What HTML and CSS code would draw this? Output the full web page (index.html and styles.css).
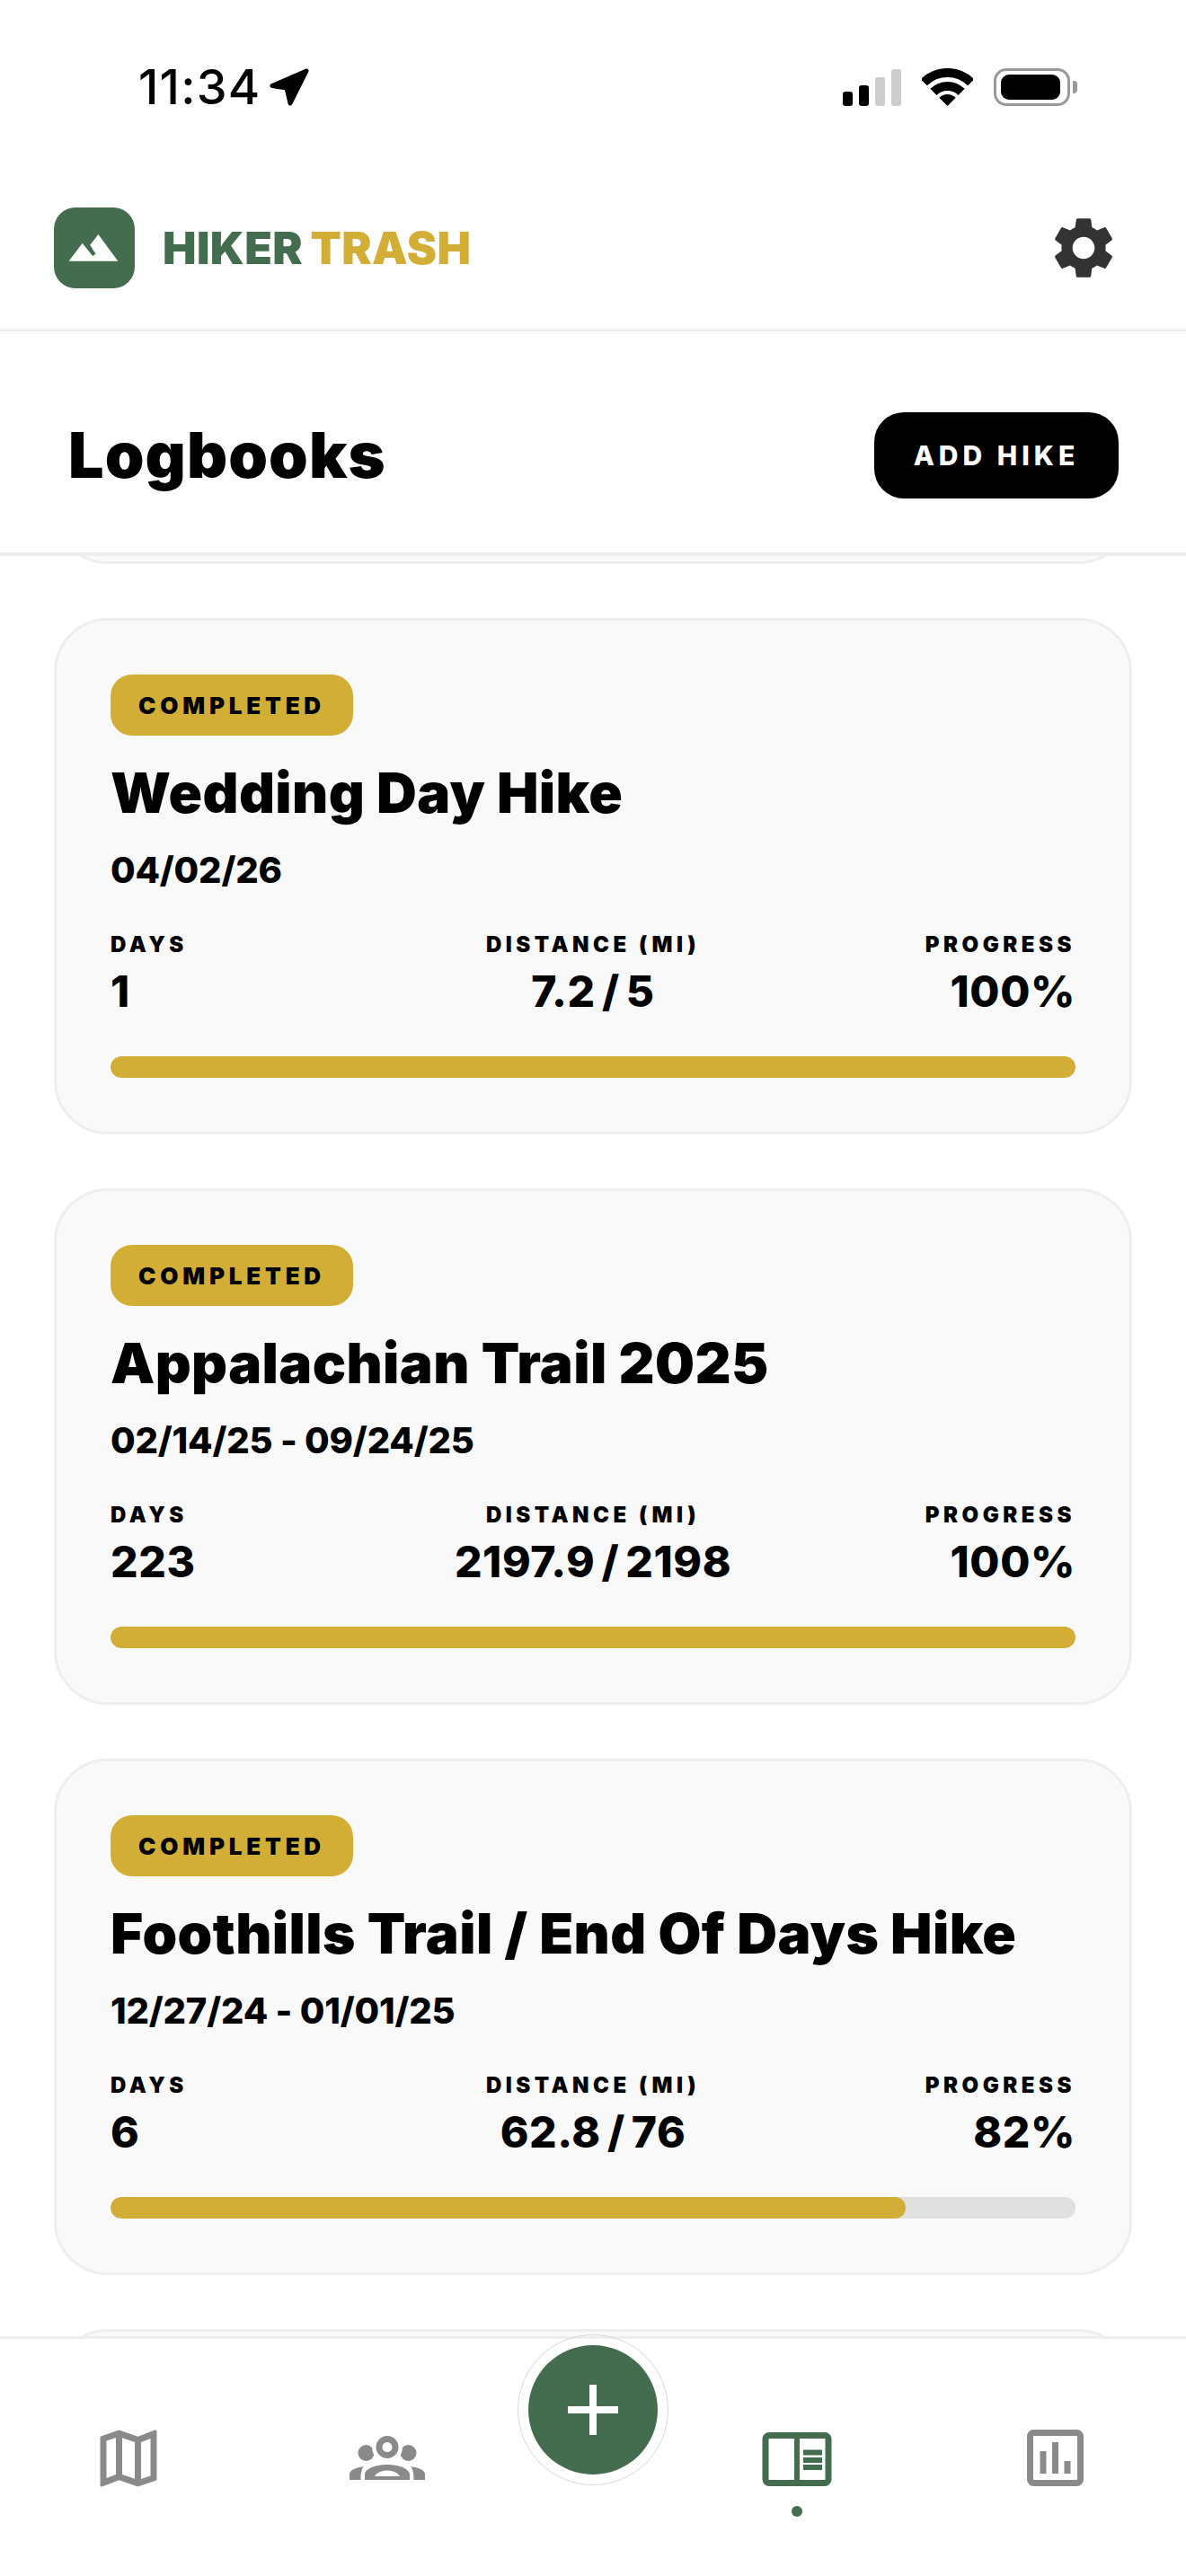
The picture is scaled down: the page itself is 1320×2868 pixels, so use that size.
FILE: index.html
```html
<!DOCTYPE html>
<html lang="en">

<head>
    <meta charset="UTF-8">
    <meta name="viewport" content="width=device-width, initial-scale=1.0">
    <link rel="stylesheet" href="styles.css">
    <title>Logbooks</title>
</head>

<body>
    <div class="app">
        <div class="status-bar">
            <div class="status-left">
                <span class="time">11:34</span>
                <svg class="location" width="44" height="42" viewBox="0 0 44 42">
                    <path d="M41 3 3 19.500 19 22 23 39Z" fill="#000" stroke="#000" stroke-width="5" stroke-linejoin="round" />
                </svg>
            </div>
            <div class="status-right">
                <div class="signal">
                    <span class="bar bar-1"></span>
                    <span class="bar bar-2"></span>
                    <span class="bar bar-3"></span>
                    <span class="bar bar-4"></span>
                </div>
                <svg class="wifi" width="57" height="42" viewBox="0 0 57 42">
                    <path d="M2.300 15.800A37 37 0 0 1 54.700 15.800" fill="none" stroke="#000" stroke-width="10" />
                    <path d="M12.900 26.400A22 22 0 0 1 44.100 26.400" fill="none" stroke="#000" stroke-width="10" />
                    <path d="M28.500 42 19.300 32.800A13 13 0 0 1 37.700 32.800Z" fill="#000" />
                </svg>
                <div class="battery">
                    <div class="battery-body"><span class="battery-level"></span></div>
                    <span class="battery-cap"></span>
                </div>
            </div>
        </div>

        <header class="topbar">
            <div class="brand">
                <div class="brand-mark">
                    <svg width="90" height="90" viewBox="0 0 90 90">
                        <path d="M16.600 59.700 31.700 39.700 43.100 54 46.500 51.700 40.200 41.700 49.400 30 71.300 59.700Z" fill="#fff" />
                    </svg>
                </div>
                <div class="brand-name"><span class="hiker">HIKER</span> <span class="trash">TRASH</span></div>
            </div>
            <svg class="gear" width="82" height="82" viewBox="0 0 24 24">
                <path d="M19.140 12.940c.04-.3.06-.61.06-.94 0-.32-.02-.64-.07-.94l2.030-1.580c.18-.14.23-.41.12-.61l-1.920-3.320c-.12-.22-.37-.29-.59-.22l-2.390.96c-.5-.38-1.030-.7-1.620-.94l-.36-2.540c-.04-.24-.24-.41-.48-.41h-3.840c-.24 0-.43.17-.47.41l-.36 2.540c-.59.24-1.130.57-1.620.94l-2.390-.96c-.22-.08-.47 0-.59.22L2.740 8.870c-.12.21-.08.47.12.61l2.030 1.580c-.05.3-.09.63-.09.94s.02.64.07.94l-2.030 1.580c-.18.14-.23.41-.12.61l1.920 3.320c.12.22.37.29.59.22l2.390-.96c.5.38 1.030.7 1.620.94l.36 2.540c.05.24.24.41.48.41h3.840c.24 0 .44-.17.47-.41l.36-2.540c.59-.24 1.130-.56 1.620-.94l2.390.96c.22.08.47 0 .59-.22l1.920-3.320c.12-.22.07-.47-.12-.61l-2.010-1.580zM12 15.600c-1.980 0-3.600-1.620-3.600-3.600s1.620-3.600 3.600-3.600 3.600 1.620 3.600 3.600-1.620 3.600-3.600 3.600z" fill="#333" />
            </svg>
        </header>

        <div class="page-head">
            <h1>Logbooks</h1>
            <button class="add-hike">ADD HIKE</button>
        </div>

        <main class="list">
            <div class="card card-stub"></div>

            <section class="card">
                <span class="badge">COMPLETED</span>
                <h2>Wedding Day Hike</h2>
                <p class="dates">04/02/26</p>
                <div class="stats">
                    <div class="stat">
                        <span class="label">DAYS</span>
                        <span class="value">1</span>
                    </div>
                    <div class="stat stat-mid">
                        <span class="label">DISTANCE (MI)</span>
                        <span class="value">7.2 / 5</span>
                    </div>
                    <div class="stat stat-end">
                        <span class="label">PROGRESS</span>
                        <span class="value">100%</span>
                    </div>
                </div>
                <div class="track"><div class="fill" style="width: 100%"></div></div>
            </section>

            <section class="card">
                <span class="badge">COMPLETED</span>
                <h2>Appalachian Trail 2025</h2>
                <p class="dates">02/14/25 - 09/24/25</p>
                <div class="stats">
                    <div class="stat">
                        <span class="label">DAYS</span>
                        <span class="value">223</span>
                    </div>
                    <div class="stat stat-mid">
                        <span class="label">DISTANCE (MI)</span>
                        <span class="value">2197.9 / 2198</span>
                    </div>
                    <div class="stat stat-end">
                        <span class="label">PROGRESS</span>
                        <span class="value">100%</span>
                    </div>
                </div>
                <div class="track"><div class="fill" style="width: 100%"></div></div>
            </section>

            <section class="card">
                <span class="badge">COMPLETED</span>
                <h2>Foothills Trail / End Of Days Hike</h2>
                <p class="dates">12/27/24 - 01/01/25</p>
                <div class="stats">
                    <div class="stat">
                        <span class="label">DAYS</span>
                        <span class="value">6</span>
                    </div>
                    <div class="stat stat-mid">
                        <span class="label">DISTANCE (MI)</span>
                        <span class="value">62.8 / 76</span>
                    </div>
                    <div class="stat stat-end">
                        <span class="label">PROGRESS</span>
                        <span class="value">82%</span>
                    </div>
                </div>
                <div class="track"><div class="fill" style="width: 82.4%"></div></div>
            </section>

            <div class="card card-stub"></div>
        </main>

        <nav class="tabs">
            <div class="tab">
                <svg width="84" height="84" viewBox="0 0 24 24">
                    <path d="M20.500 3l-.16.03L15 5.100 9 3 3.360 4.900c-.21.07-.36.25-.36.48V20.500c0 .28.22.5.5.5l.16-.03L9 18.900l6 2.100 5.640-1.900c.21-.07.36-.25.36-.48V3.500c0-.28-.22-.5-.5-.5zM10 5.470l4 1.400v11.660l-4-1.400V5.470zm-5 .99l3-1.010v11.700l-3 1.160V6.460zm14 11.080l-3 1.010V6.860l3-1.160v11.840z" fill="#8a8a8a" />
                </svg>
            </div>
            <div class="tab">
                <svg width="84" height="84" viewBox="0 0 84 84">
                    <circle cx="18.500" cy="36" r="9" fill="#8a8a8a" />
                    <circle cx="65.500" cy="36" r="9" fill="#8a8a8a" />
                    <circle cx="42" cy="29.500" r="17" fill="#fff" />
                    <circle cx="42" cy="29.500" r="9" fill="none" stroke="#8a8a8a" stroke-width="7" />
                    <path d="M0 66V60C0 56 5 52.500 16 51 13 54 12.500 60 12.500 66Z" fill="#8a8a8a" />
                    <path d="M84 66V60C84 56 79 52.500 68 51 71 54 71.500 60 71.500 66Z" fill="#8a8a8a" />
                    <path fill-rule="evenodd" d="M17 66V60C17 54 28 49 42 49S67 54 67 60V66ZM28 62H56C54 58 48 55.500 42 55.500S30 58 28 62Z" fill="#8a8a8a" />
                </svg>
            </div>
            <div class="tab-add">
                <button class="fab">
                    <svg width="58" height="58" viewBox="0 0 58 58">
                        <path d="M29 1V57M1 29H57" stroke="#fff" stroke-width="8" />
                    </svg>
                </button>
            </div>
            <div class="tab">
                <svg width="84" height="84" viewBox="0 0 84 84">
                    <rect x="7" y="16.500" width="70" height="53" rx="4" fill="none" stroke="#436d4e" stroke-width="7" />
                    <path d="M42 16V70" stroke="#436d4e" stroke-width="6" />
                    <path d="M49 35.500H70M49 44H70M49 52H70" stroke="#436d4e" stroke-width="6" />
                </svg>
                <span class="tab-dot"></span>
            </div>
            <div class="tab">
                <svg width="84" height="84" viewBox="0 0 84 84">
                    <rect x="13.500" y="13.500" width="56" height="56" rx="4" fill="none" stroke="#8a8a8a" stroke-width="7" />
                    <path d="M28 34V59M41.500 24V59M55 45V59" stroke="#8a8a8a" stroke-width="7" />
                </svg>
            </div>
        </nav>
    </div>
</body>

</html>
```
FILE: styles.css
```css
* {
    margin: 0;
    padding: 0;
    box-sizing: border-box;
}

body {
    background: #fff;
    color: #000;
    font-family: Inter, "Liberation Sans", sans-serif;
}

.app {
    width: 1320px;
    height: 2868px;
    display: flex;
    flex-direction: column;
    overflow: hidden;
    background: #fff;
}

/* status bar */
.status-bar {
    height: 194px;
    flex-shrink: 0;
    display: flex;
    justify-content: space-between;
    align-items: center;
    padding: 0 121px 0 154px;
}

.status-left {
    display: flex;
    align-items: center;
    gap: 9px;
}

.time {
    font-size: 54px;
    font-weight: 500;
    letter-spacing: 1.2px;
    line-height: 60px;
}

.status-right {
    display: flex;
    align-items: center;
    gap: 23px;
}

.signal {
    display: flex;
    align-items: flex-end;
    gap: 7px;
    height: 42px;
}

.bar {
    width: 11px;
    border-radius: 3px;
    background: #000;
}

.bar-1 { height: 16px; }
.bar-2 { height: 23px; }
.bar-3 { height: 32px; background: #ccc; }
.bar-4 { height: 41px; background: #ccc; }

.battery {
    display: flex;
    align-items: center;
    gap: 3px;
}

.battery-body {
    width: 85px;
    height: 42px;
    padding: 4px 8px 4px 5px;
    border: 3px solid #999;
    border-radius: 14px;
}

.battery-level {
    display: block;
    height: 100%;
    background: #000;
    border-radius: 9px;
}

.battery-cap {
    width: 5px;
    height: 14px;
    background: #999;
    border-radius: 0 4px 4px 0;
}

/* top bar */
.topbar {
    height: 175px;
    flex-shrink: 0;
    display: flex;
    justify-content: space-between;
    align-items: flex-start;
    padding: 37px 73px 0 60px;
    border-bottom: 3px solid #f0f0f0;
}

.brand {
    display: flex;
    align-items: center;
    gap: 31px;
}

.brand-mark {
    width: 90px;
    height: 90px;
    background: #436d4e;
    border-radius: 24px;
}

.brand-mark svg {
    display: block;
}

.brand-name {
    font-size: 50px;
    font-weight: 900;
    letter-spacing: 0.4px;
    word-spacing: -2px;
    white-space: nowrap;
}

.hiker {
    color: #436d4e;
}

.trash {
    color: #d3ae36;
}

.gear {
    margin-top: 4px;
}

/* page heading */
.page-head {
    height: 250px;
    flex-shrink: 0;
    display: flex;
    justify-content: space-between;
    align-items: flex-start;
    padding: 90px 75px 0 76px;
    border-bottom: 4px solid #eee;
    background: #fff;
}

.page-head h1 {
    margin-top: 8px;
    font-size: 70px;
    font-weight: 900;
    line-height: 80px;
    letter-spacing: 1.1px;
}

.add-hike {
    width: 272px;
    height: 96px;
    background: #000;
    color: #fff;
    border: none;
    border-radius: 33px;
    font-family: inherit;
    font-size: 30px;
    font-weight: 800;
    letter-spacing: 5px;
}

/* logbook list */
.list {
    flex: 1;
    min-height: 0;
    overflow: hidden;
    padding: 0 60px;
    display: flex;
    flex-direction: column;
    gap: 60px;
}

.card {
    flex-shrink: 0;
    height: 575px;
    padding: 60px;
    background: #f9f9f9;
    border: 3px solid #eee;
    border-radius: 60px;
}

.card-stub:first-child {
    margin-top: -566px;
}

.badge {
    display: inline-block;
    width: 270px;
    height: 68px;
    background: #d3ae36;
    border-radius: 24px;
    font-size: 26px;
    font-weight: 900;
    line-height: 70px;
    letter-spacing: 4.8px;
    text-align: center;
}

.card h2 {
    margin-top: 24px;
    font-size: 62px;
    font-weight: 900;
    line-height: 80px;
    letter-spacing: 0.4px;
}

.dates {
    margin-top: 20px;
    font-size: 40px;
    font-weight: 800;
    line-height: 52px;
    letter-spacing: -0.2px;
}

.stats {
    margin-top: 42px;
    display: grid;
    grid-template-columns: 1fr auto 1fr;
}

.stat {
    display: flex;
    flex-direction: column;
    gap: 9px;
}

.stat-mid {
    align-items: center;
}

.stat-end {
    align-items: flex-end;
}

.label {
    font-size: 24px;
    font-weight: 900;
    line-height: 30px;
    letter-spacing: 4.5px;
}

.value {
    font-size: 48px;
    font-weight: 800;
    line-height: 56px;
    letter-spacing: 0.6px;
    word-spacing: -4px;
}

.track {
    margin-top: 44px;
    height: 24px;
    background: #e0e0e0;
    border-radius: 12px;
    overflow: hidden;
}

.fill {
    height: 100%;
    background: #d3ae36;
    border-radius: 12px;
}

/* bottom tabs */
.tabs {
    height: 267px;
    flex-shrink: 0;
    display: grid;
    grid-template-columns: 286px 290px 168px 286px 290px;
    border-top: 3px solid #eee;
    background: #fff;
}

.tab {
    display: flex;
    flex-direction: column;
    align-items: center;
    padding-top: 91px;
}

.tab svg {
    display: block;
}

.tab-dot {
    width: 12px;
    height: 12px;
    margin-top: 11px;
    border-radius: 50%;
    background: #436d4e;
}

.tab-add {
    margin-top: -5px;
}

.fab {
    width: 168px;
    height: 168px;
    display: flex;
    align-items: center;
    justify-content: center;
    background: #436d4e;
    background-clip: content-box;
    border: 1px solid #d8d8d8;
    border-radius: 50%;
    padding: 11px;
    box-shadow: none;
}

.fab svg {
    display: block;
}
```
